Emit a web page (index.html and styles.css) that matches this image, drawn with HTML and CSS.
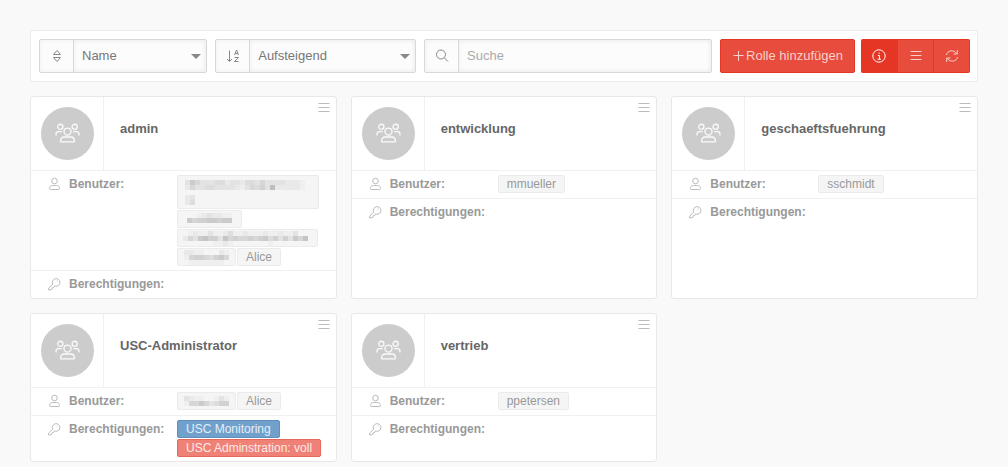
FILE: index.html
```html
<!DOCTYPE html>
<html lang="de">
<head>
<meta charset="utf-8">
<title>Rollen</title>
<link rel="stylesheet" href="styles.css">
</head>
<body>
<svg class="sprite" aria-hidden="true">
  <symbol id="i-sort" viewBox="0 0 14 14"><path d="M3.500 5.500 7 1.500l3.500 4zM3.500 8.500h7L7 12.500z"/></symbol>
  <symbol id="i-az" viewBox="0 0 14 14"><path d="M3.500 1.500v11M1 10l2.500 2.500L6 10"/><path d="M8.500 6l2-5 2 5M9 4.500h3M8.500 8.500h4l-4 4h4"/></symbol>
  <symbol id="i-search" viewBox="0 0 14 14"><circle cx="6" cy="5.500" r="4.500"/><path d="M9.200 8.700l3.800 3.800"/></symbol>
  <symbol id="i-plus" viewBox="0 0 12 12"><path d="M6.500 1v10M1.500 5.500h10"/></symbol>
  <symbol id="i-info" viewBox="0 0 14 14"><circle cx="7" cy="7" r="6.200"/><path d="M5.800 6.500h1.700v3.500M5.500 10.200h3.500M6.500 4.200h1.300"/></symbol>
  <symbol id="i-bars" viewBox="0 0 12 10"><path d="M0.500 0.500h11M0.500 4.500h11M0.500 8.500h11"/></symbol>
  <symbol id="i-refresh" viewBox="0 0 14 14"><path d="M1.500 6C2 1.500 9 0 11.800 4.800M12.300 1v4H8.500M12.500 8C12 12.500 5 14 2.200 9.200M1.700 13V9h3.800"/></symbol>
  <symbol id="i-user" viewBox="0 0 14 14"><circle cx="6.500" cy="4" r="2.800"/><path d="M4.500 8.500h4c2 0 3 1.300 3 3 0 .7-.3 1-1 1h-8c-.7 0-1-.3-1-1 0-1.700 1-3 3-3z"/></symbol>
  <symbol id="i-key" viewBox="0 0 14 14"><path d="M4.800 7.200A3.800 3.800 0 1 1 7.500 9.200L6 9.300 5.700 10.500 4.200 10.800 3.800 12.300 2 13H.7v-2z"/><path d="M8.700 4h.8"/></symbol>
  <symbol id="i-group" viewBox="0 0 26 22"><circle cx="5.500" cy="4" r="2.700"/><circle cx="20.500" cy="4" r="2.700"/><circle cx="13" cy="9" r="3.700"/><path d="M1 13v-1.500C1 10 2.200 9 3.500 9H7M25 13v-1.500C25 10 23.800 9 22.500 9H19M9.500 14.700h7c2.300 0 3.800 2 3.800 4.500 0 .4-.2.600-.6.600H6.300c-.4 0-.6-.2-.6-.6 0-2.500 1.500-4.500 3.800-4.500z"/></symbol>
</svg>

<main class="page">
  <form class="toolbar">
    <div class="field field-sort">
      <label class="addon" for="sort" aria-label="Sortieren nach"><svg class="icon i14"><use href="#i-sort"/></svg></label>
      <select class="control" id="sort"><option>Name</option></select>
      <span class="caret"></span>
    </div>
    <div class="field field-order">
      <label class="addon" for="order" aria-label="Reihenfolge"><svg class="icon i14"><use href="#i-az"/></svg></label>
      <select class="control" id="order"><option>Aufsteigend</option></select>
      <span class="caret"></span>
    </div>
    <div class="field field-search">
      <label class="addon" for="search" aria-label="Suche"><svg class="icon i14"><use href="#i-search"/></svg></label>
      <input class="control" id="search" type="text" placeholder="Suche">
    </div>
    <div class="actions">
      <button class="btn btn-add" type="button"><svg class="icon i12"><use href="#i-plus"/></svg>Rolle hinzufügen</button>
      <div class="btn-group">
        <button class="btn btn-icon active" type="button" aria-label="Details"><svg class="icon i14"><use href="#i-info"/></svg></button>
        <button class="btn btn-icon" type="button" aria-label="Liste"><svg class="icon bars"><use href="#i-bars"/></svg></button>
        <button class="btn btn-icon" type="button" aria-label="Aktualisieren"><svg class="icon i14"><use href="#i-refresh"/></svg></button>
      </div>
    </div>
  </form>

  <section class="cards">
    <article class="card">
      <header class="card-head">
        <div class="avatar-cell"><div class="avatar"><svg class="icon group"><use href="#i-group"/></svg></div></div>
        <h2 class="title">admin</h2>
        <button class="menu" type="button" aria-label="Menü"><svg class="icon bars"><use href="#i-bars"/></svg></button>
      </header>
      <div class="row"><svg class="icon i14"><use href="#i-user"/></svg><span class="label">Benutzer:</span>
        <div class="tags">
          <span class="tag mask-tall" data-cells="375333442332443533332221 253344333321354639222221 000000000000000000000000 230000000000000000000000 240000000000000000000000"></span>
          <span class="tag mask-short" data-cells="001232211 756677677"></span>
          <span class="tag mask-long" data-cells="012113112411211121121130 2537866385655656746363758 0000001121000000010000000"></span>
          <span class="tag mask-name" data-cells="221100021 156654675 011111110"></span>
          <span class="tag">Alice</span>
        </div>
      </div>
      <div class="row"><svg class="icon i14"><use href="#i-key"/></svg><span class="label">Berechtigungen:</span><div class="tags"></div></div>
    </article>

    <article class="card">
      <header class="card-head">
        <div class="avatar-cell"><div class="avatar"><svg class="icon group"><use href="#i-group"/></svg></div></div>
        <h2 class="title">entwicklung</h2>
        <button class="menu" type="button" aria-label="Menü"><svg class="icon bars"><use href="#i-bars"/></svg></button>
      </header>
      <div class="row"><svg class="icon i14"><use href="#i-user"/></svg><span class="label">Benutzer:</span><div class="tags"><span class="tag">mmueller</span></div></div>
      <div class="row"><svg class="icon i14"><use href="#i-key"/></svg><span class="label">Berechtigungen:</span><div class="tags"></div></div>
    </article>

    <article class="card">
      <header class="card-head">
        <div class="avatar-cell"><div class="avatar"><svg class="icon group"><use href="#i-group"/></svg></div></div>
        <h2 class="title">geschaeftsfuehrung</h2>
        <button class="menu" type="button" aria-label="Menü"><svg class="icon bars"><use href="#i-bars"/></svg></button>
      </header>
      <div class="row"><svg class="icon i14"><use href="#i-user"/></svg><span class="label">Benutzer:</span><div class="tags"><span class="tag">sschmidt</span></div></div>
      <div class="row"><svg class="icon i14"><use href="#i-key"/></svg><span class="label">Berechtigungen:</span><div class="tags"></div></div>
    </article>

    <article class="card">
      <header class="card-head">
        <div class="avatar-cell"><div class="avatar"><svg class="icon group"><use href="#i-group"/></svg></div></div>
        <h2 class="title">USC-Administrator</h2>
        <button class="menu" type="button" aria-label="Menü"><svg class="icon bars"><use href="#i-bars"/></svg></button>
      </header>
      <div class="row"><svg class="icon i14"><use href="#i-user"/></svg><span class="label">Benutzer:</span>
        <div class="tags">
          <span class="tag mask-name mask-middle" data-cells="321100131 155753466"></span>
          <span class="tag">Alice</span>
        </div>
      </div>
      <div class="row"><svg class="icon i14"><use href="#i-key"/></svg><span class="label">Berechtigungen:</span>
        <div class="tags"><span class="tag tag-blue">USC Monitoring</span><span class="tag tag-red">USC Adminstration: voll</span></div>
      </div>
    </article>

    <article class="card">
      <header class="card-head">
        <div class="avatar-cell"><div class="avatar"><svg class="icon group"><use href="#i-group"/></svg></div></div>
        <h2 class="title">vertrieb</h2>
        <button class="menu" type="button" aria-label="Menü"><svg class="icon bars"><use href="#i-bars"/></svg></button>
      </header>
      <div class="row"><svg class="icon i14"><use href="#i-user"/></svg><span class="label">Benutzer:</span><div class="tags"><span class="tag">ppetersen</span></div></div>
      <div class="row"><svg class="icon i14"><use href="#i-key"/></svg><span class="label">Berechtigungen:</span><div class="tags"></div></div>
    </article>
  </section>
</main>
<script src="mask.js"></script>
</body>
</html>
```

FILE: mask.js
```js
// Fills masked user tags with grey blocks; each digit is the darkness of one block.
const NS = "http://www.w3.org/2000/svg";
const SIZE = 5;
document.querySelectorAll("[data-cells]").forEach((tag) => {
  const rows = tag.dataset.cells.split(" ");
  const cols = Math.max(...rows.map((r) => r.length));
  const svg = document.createElementNS(NS, "svg");
  svg.setAttribute("width", cols * SIZE);
  svg.setAttribute("height", rows.length * SIZE);
  svg.setAttribute("class", "mask");
  rows.forEach((row, y) => [...row].forEach((digit, x) => {
    if (digit === "0") return;
    const grey = 245 - Number(digit) * 6;
    const rect = document.createElementNS(NS, "rect");
    rect.setAttribute("x", x * SIZE);
    rect.setAttribute("y", y * SIZE);
    rect.setAttribute("width", SIZE);
    rect.setAttribute("height", SIZE);
    rect.setAttribute("fill", `rgb(${grey},${grey},${grey})`);
    svg.append(rect);
  }));
  tag.append(svg);
});
```

FILE: styles.css
```css
* { box-sizing: border-box; }
body {
  margin: 0;
  background: #f9f9f9;
  color: #666;
  font: 13px/18px "Liberation Sans", Arial, sans-serif;
}
.sprite { position: absolute; width: 0; height: 0; }
.page { display: flex; flex-direction: column; gap: 14px; padding: 30px 30px 5px; }

.icon { display: block; flex: none; fill: none; stroke: currentColor; stroke-width: 1; }
.i12 { width: 12px; height: 12px; }
.i14 { width: 14px; height: 14px; }
.bars { width: 12px; height: 10px; }
.group { width: 25px; height: 21px; stroke-width: 1.4; }

.toolbar {
  display: flex;
  gap: 8px;
  padding: 8px 7px 8px 8px;
  background: #fff;
  border: 1px solid #ebebeb;
  border-radius: 3px;
}
.field {
  position: relative;
  display: flex;
  min-width: 0;
  height: 34px;
  background: #fcfcfc;
  border: 1px solid #d8d8d8;
  border-radius: 2px;
  box-shadow: inset 0 0 5px #eee;
}
.field-sort { flex: 168 1 0; }
.field-order { flex: 201 1 0; }
.field-search { flex: 289 1 0; }
.addon {
  display: flex;
  flex: none;
  align-items: center;
  justify-content: center;
  width: 34px;
  border-right: 1px solid #d8d8d8;
  color: #888;
}
.control {
  flex: 1;
  min-width: 0;
  padding: 0 8px;
  appearance: none;
  background: transparent;
  border: 0;
  outline: 0;
  color: #777;
  font: inherit;
  box-shadow: inset 0 0 5px #eee;
}
.control::placeholder { color: #aaa; opacity: 1; }
.caret {
  position: absolute;
  top: 14px;
  right: 5px;
  border: 5px solid transparent;
  border-top-color: #888;
  border-bottom: 0;
  pointer-events: none;
}
.actions { display: flex; gap: 6px; }
.btn {
  display: flex;
  align-items: center;
  justify-content: center;
  height: 34px;
  padding: 0 10px;
  background: #e74c3c;
  border: 1px solid #e53524;
  border-radius: 2px;
  color: #f8cfca;
  font: inherit;
  white-space: nowrap;
}
.btn-add { gap: 2px; width: 135px; }
.btn-group { display: flex; }
.btn-icon { width: 36px; padding: 0; border-left-width: 0; border-radius: 0; }
.btn-icon + .btn-icon + .btn-icon { border-radius: 0 2px 2px 0; }
.btn-icon.active { width: 37px; background: #e53524; border-radius: 2px 0 0 2px; color: #fff; }

.cards { display: grid; grid-template-columns: repeat(3, minmax(0, 1fr)); gap: 14px; }
.card { background: #fff; border: 1px solid #e8e8e8; border-radius: 3px; }
.card-head { display: flex; position: relative; }
.avatar-cell { padding: 10px 9px 10px 10px; border-right: 1px solid #f0f0f0; }
.avatar {
  display: flex;
  align-items: center;
  justify-content: center;
  width: 53px;
  height: 53px;
  background: #ccc;
  border-radius: 50%;
  color: #fafafa;
}
.title {
  flex: 1;
  min-width: 0;
  margin: 0;
  padding: 23px 16px 0;
  font-size: 13px;
  font-weight: bold;
  line-height: 18px;
}
.menu {
  position: absolute;
  top: 6px;
  right: 6px;
  padding: 0;
  background: none;
  border: 0;
  color: #bbb;
}
.row {
  display: grid;
  grid-template-columns: 14px 101px minmax(0, 1fr);
  column-gap: 7px;
  min-height: 28px;
  padding: 4px 8px 4px 17px;
  border-top: 1px solid #f0f0f0;
  color: #bbb;
}
.row > .icon { margin-top: 2px; }
.label { color: #999; font-size: 12px; font-weight: bold; }
.tags { display: flex; flex-wrap: wrap; align-items: flex-start; gap: 1px; }
.tag {
  min-height: 18px;
  padding: 0 8px;
  background: #f5f5f5;
  border: 1px solid #ebebeb;
  border-radius: 2px;
  color: #999;
  font-size: 12px;
  line-height: 16px;
}
.mask { display: block; }
.mask-tall { padding: 4px 13px 3px 7px; }
.mask-short { padding: 2px 9px; margin-right: 60px; }
.mask-long { padding: 1px 9px 0 5px; }
.mask-name { padding: 1px 6px 0; }
.mask-middle { padding-top: 3px; }
.tag-blue { background: #70a1cd; border-color: #5f8fba; color: #e6eff7; }
.tag-red { background: #ef8176; border-color: #e4685c; color: #fdeae8; }
```
